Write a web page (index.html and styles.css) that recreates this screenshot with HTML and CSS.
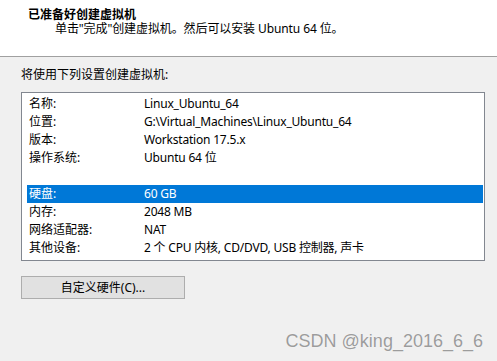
FILE: index.html
```html
<!DOCTYPE html>
<html lang="zh-CN">
<head>
<meta charset="utf-8">
<link rel="stylesheet" href="styles.css">
</head>
<body>
<div class="header">
  <div class="title">已准备好创建虚拟机</div>
  <div class="subtitle">单击"完成"创建虚拟机。然后可以安装 Ubuntu 64 位。</div>
</div>
<div class="content">
  <div class="intro">将使用下列设置创建虚拟机:</div>
  <div class="list">
    <div class="row"><span class="label">名称:</span><span class="value">Linux_Ubuntu_64</span></div>
    <div class="row"><span class="label">位置:</span><span class="value">G:\Virtual_Machines\Linux_Ubuntu_64</span></div>
    <div class="row"><span class="label">版本:</span><span class="value">Workstation 17.5.x</span></div>
    <div class="row"><span class="label">操作系统:</span><span class="value">Ubuntu 64 位</span></div>
    <div class="row"></div>
    <div class="row selected"><span class="label">硬盘:</span><span class="value">60 GB</span></div>
    <div class="row"><span class="label">内存:</span><span class="value">2048 MB</span></div>
    <div class="row"><span class="label">网络适配器:</span><span class="value">NAT</span></div>
    <div class="row"><span class="label">其他设备:</span><span class="value">2 个 CPU 内核, CD/DVD, USB 控制器, 声卡</span></div>
  </div>
  <button class="btn">自定义硬件(C)...</button>
</div>
<div class="watermark">CSDN @king_2016_6_6</div>
</body>
</html>
```
FILE: styles.css
```css
html, body {
  margin: 0;
  padding: 0;
}
body {
  width: 497px;
  height: 361px;
  background: #f0f0f0;
  font-family: "Noto Sans", "Noto Sans CJK SC", sans-serif;
  font-size: 12px;
  color: #000;
  position: relative;
  overflow: hidden;
}
.header {
  background: #fff;
  border-bottom: 1px solid #a0a0a0;
  box-sizing: border-box;
  height: 57px;
}
.title {
  padding: 8px 0 0 28px;
  font-family: "Noto Sans CJK SC", sans-serif;
  font-weight: bold;
  font-size: 12px;
  line-height: 12px;
}
.subtitle {
  margin-top: 3px;
  padding-left: 55px;
  line-height: 12px;
  letter-spacing: -0.1px;
}
.content {
  padding: 0 0 0 21px;
}
.intro {
  margin-top: 9px;
  line-height: 17px;
}
.list {
  margin-top: 9px;
  width: 464px;
  height: 169px;
  box-sizing: border-box;
  background: #fff;
  border: 1px solid #828790;
  padding: 2px 1px 0 5px;
}
.row {
  height: 18px;
  line-height: 18px;
  display: flex;
  white-space: nowrap;
}
.label {
  width: 117px;
  padding-left: 2px;
  box-sizing: border-box;
  flex: none;
}
.value {
  letter-spacing: -0.2px;
}
.selected {
  background: #0078d7;
  color: #fff;
}
.btn {
  display: block;
  margin-top: 15px;
  width: 164px;
  height: 23px;
  background: #e1e1e1;
  border: 1px solid #adadad;
  font-family: "Noto Sans", "Noto Sans CJK SC", sans-serif;
  font-size: 12px;
  color: #000;
  padding: 0;
  line-height: 20px;
}
.watermark {
  position: absolute;
  right: 14px;
  top: 331px;
  font-family: "Liberation Sans", Arial, sans-serif;
  font-size: 18px;
  color: #9c9c9c;
  text-shadow: 0 0 1px #fff;
  line-height: 20px;
}
```
